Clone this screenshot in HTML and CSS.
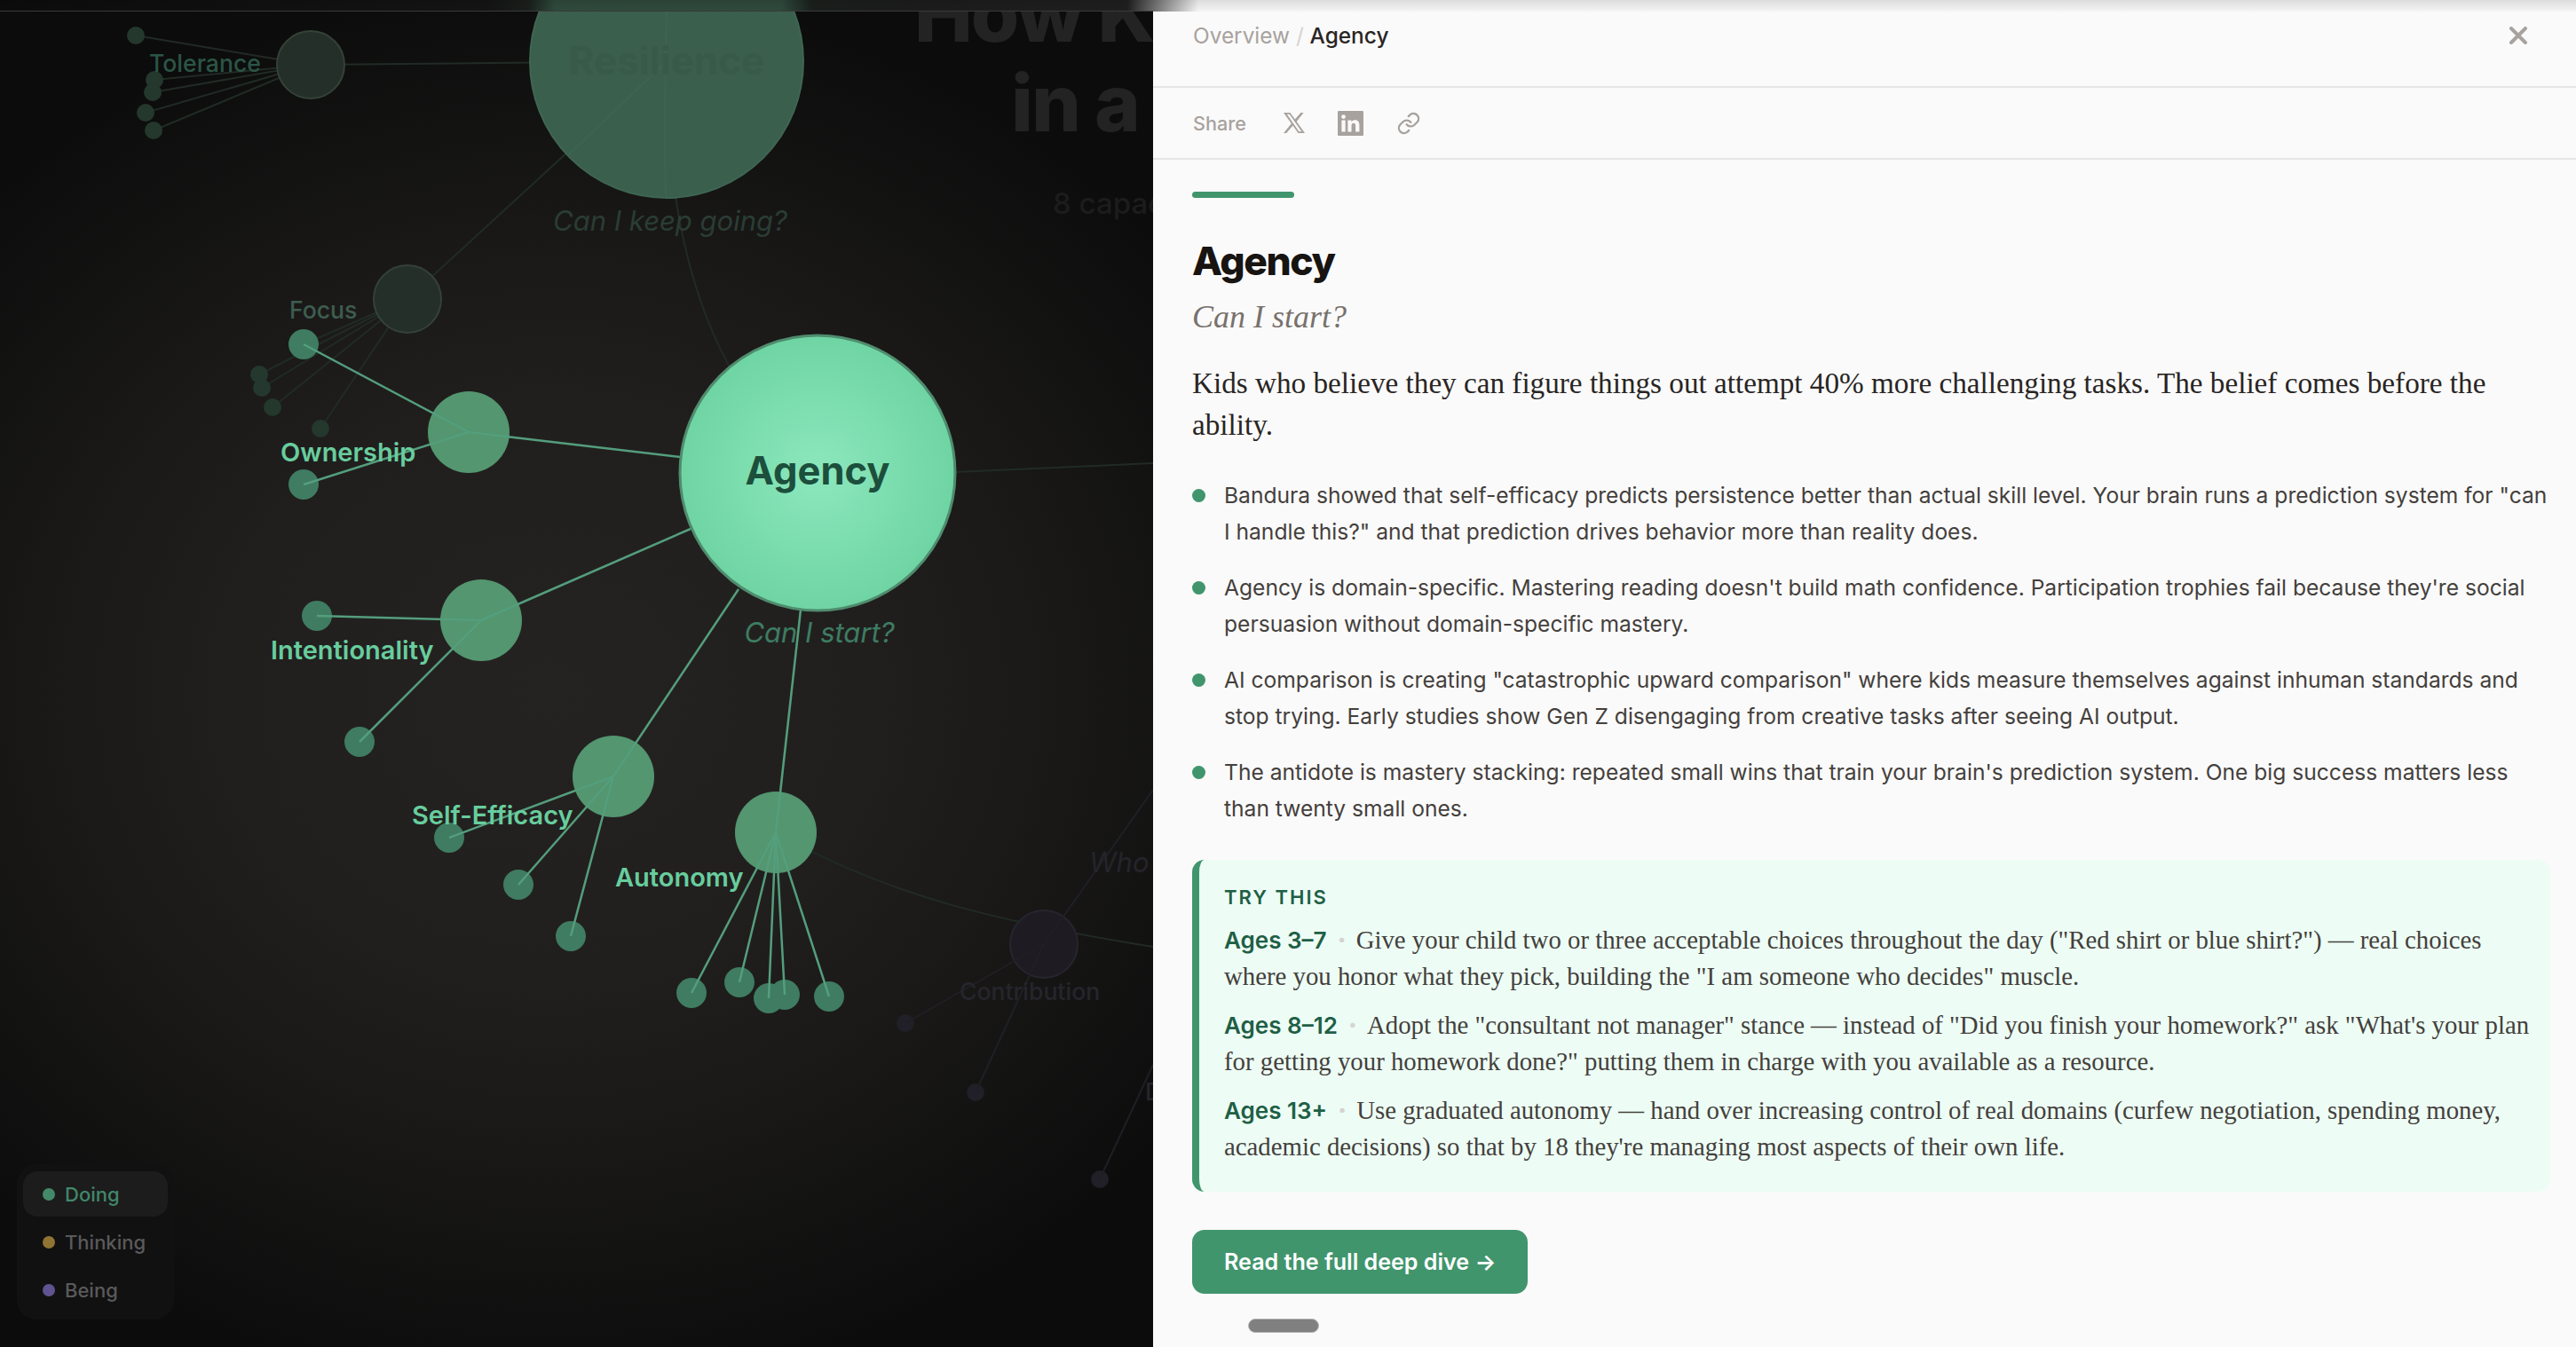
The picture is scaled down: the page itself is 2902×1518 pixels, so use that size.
FILE: index.html
```html
<!DOCTYPE html>
<html lang="en">
<head>
    <meta charset="UTF-8">
    <title>Agency</title>
    <link rel="stylesheet" href="styles.css">
</head>
<body>
    <div class="page">
        <div class="graph">
            <svg class="graph-svg" width="1299" height="1518" viewBox="0 0 1299 1518">
                <defs>
                    <radialGradient id="agency-fill">
                        <stop offset="0" stop-color="#8ce8bd"/>
                        <stop offset="1" stop-color="#6fd4a3"/>
                    </radialGradient>
                </defs>

                <text class="hero hero-top" x="1030" y="47">How Kids Build</text>
                <text class="hero" x="1139" y="148">in a World</text>
                <text class="hero-sub" x="1186" y="241">8 capacities</text>

                <!-- dim links -->
                <g class="link link-dim">
                    <path d="M751 0 C748 120 750 280 821 412"/>
                    <path d="M751 69 L350 73"/>
                    <path d="M751 69 L459 337"/>
                    <path d="M350 73 L153 40 M350 73 L174 90 M350 73 L172 104 M350 73 L164 127 M350 73 L173 147"/>
                    <path d="M459 337 L342 388 M459 337 L292 422 M459 337 L295 437 M459 337 L307 459 M459 337 L361 483"/>
                    <path d="M1076 532 L1299 522"/>
                    <path d="M874 938 C1000 1010 1130 1040 1299 1067"/>
                </g>

                <!-- far nodes -->
                <circle class="hub-large" cx="751" cy="69" r="154"/>
                <circle class="hub-dim" cx="350" cy="73" r="38"/>
                <circle class="hub-dim" cx="459" cy="337" r="38"/>
                <circle class="leaf-dim" cx="153" cy="40" r="10"/>
                <circle class="leaf-dim" cx="174" cy="90" r="10"/>
                <circle class="leaf-dim" cx="172" cy="104" r="10"/>
                <circle class="leaf-dim" cx="164" cy="127" r="10"/>
                <circle class="leaf-dim" cx="173" cy="147" r="10"/>
                <circle class="leaf-dim" cx="292" cy="422" r="10"/>
                <circle class="leaf-dim" cx="295" cy="437" r="10"/>
                <circle class="leaf-dim" cx="307" cy="459" r="10"/>
                <circle class="leaf-dim" cx="361" cy="483" r="10"/>
                <circle class="hub-purple" cx="1176" cy="1064" r="38"/>
                <circle class="leaf-purple" cx="1020" cy="1153" r="10"/>
                <circle class="leaf-purple" cx="1099" cy="1231" r="10"/>
                <circle class="leaf-purple" cx="1239" cy="1329" r="10"/>

                <path class="link link-inside" d="M751 13 C749 90 748 160 750 223"/>
                <path class="link link-inside" d="M751 69 L640 175"/>
                <g class="link link-purple">
                    <path d="M1176 1064 L1020 1153 M1176 1064 L1099 1231"/>
                    <path d="M1176 1064 L1299 890"/>
                    <path d="M1239 1329 L1299 1200"/>
                </g>

                <!-- agency group -->
                <circle class="leaf" cx="342" cy="388" r="17"/>
                <circle class="leaf" cx="342" cy="546" r="17"/>
                <circle class="leaf" cx="357" cy="694" r="17"/>
                <circle class="leaf" cx="405" cy="836" r="17"/>
                <circle class="leaf" cx="506" cy="944" r="17"/>
                <circle class="leaf" cx="584" cy="997" r="17"/>
                <circle class="leaf" cx="643" cy="1055" r="17"/>
                <circle class="leaf" cx="779" cy="1119" r="17"/>
                <circle class="leaf" cx="833" cy="1107" r="17"/>
                <circle class="leaf" cx="884" cy="1121" r="17"/>
                <circle class="leaf" cx="866" cy="1125" r="17"/>
                <circle class="leaf" cx="934" cy="1123" r="17"/>
                <circle class="hub" cx="528" cy="487" r="46"/>
                <circle class="hub" cx="542" cy="699" r="46"/>
                <circle class="hub" cx="691" cy="875" r="46"/>
                <circle class="hub" cx="874" cy="938" r="46"/>

                <g class="link link-bright">
                    <path d="M528 487 L766 515"/>
                    <path d="M542 699 L778 596"/>
                    <path d="M691 875 L832 664"/>
                    <path d="M874 938 L902 687"/>
                    <path d="M528 487 L342 388 M528 487 L342 546"/>
                    <path d="M542 699 L357 694 M542 699 L405 836"/>
                    <path d="M691 875 L506 944 M691 875 L584 997 M691 875 L643 1055"/>
                    <path d="M874 938 L779 1119 M874 938 L833 1107 M874 938 L866 1125 M874 938 L884 1121 M874 938 L934 1123"/>
                </g>

                <circle class="agency-node" cx="921" cy="533" r="155"/>
                <text class="agency-label" x="921" y="546" text-anchor="middle">Agency</text>
                <text class="question" x="923" y="724" text-anchor="middle">Can I start?</text>

                <text class="label label-far" x="168" y="81">Tolerance</text>
                <text class="label label-mid" x="326" y="359">Focus</text>
                <text class="label" x="316" y="520">Ownership</text>
                <text class="label" x="305" y="743">Intentionality</text>
                <text class="label" x="464" y="929">Self-Efficacy</text>
                <text class="label" x="693" y="999">Autonomy</text>
                <text class="label label-purple" x="1081" y="1127">Contribution</text>
                <text class="label label-inside" x="751" y="84" text-anchor="middle">Resilience</text>
                <text class="question question-far" x="755" y="260" text-anchor="middle">Can I keep going?</text>
                <text class="question question-purple" x="1227" y="983">Who am I?</text>
                <text class="label label-purple" x="1290" y="1240">Drive</text>
            </svg>

            <div class="legend">
                <div class="legend-item active"><span class="dot dot-doing"></span>Doing</div>
                <div class="legend-item"><span class="dot dot-thinking"></span>Thinking</div>
                <div class="legend-item"><span class="dot dot-being"></span>Being</div>
            </div>
        </div>

        <div class="panel">
            <div class="panel-head">
                <div class="crumbs"><span class="crumb-link">Overview</span> <span class="crumb-sep">/</span> <span class="crumb-now">Agency</span></div>
                <svg class="close-icon" width="20" height="20" viewBox="0 0 20 20">
                    <path d="M2 2 L18 18 M18 2 L2 18"/>
                </svg>
            </div>

            <div class="share-row">
                <span class="share-label">Share</span>
                <svg class="icon-x" width="26" height="25" viewBox="0 0 26 25">
                    <path d="M1 1 H8.5 L25 24 H17.5 Z M4.8 2.8 L18.4 22.2 H21.3 L7.7 2.8 Z" fill-rule="evenodd"/>
                    <path d="M23.6 1 H20.4 L12.8 9.7 L14.8 12 Z M1 24 H4.2 L12 15 L10.2 12.8 Z"/>
                </svg>
                <svg class="icon-in" width="29" height="28" viewBox="0 0 29 28">
                    <path fill-rule="evenodd" d="M1 0 H28 A1 1 0 0 1 29 1 V27 A1 1 0 0 1 28 28 H1 A1 1 0 0 1 0 27 V1 A1 1 0 0 1 1 0 Z M4.4 10.6 V23.6 H8.6 V10.6 Z M6.5 4.2 A2.4 2.4 0 1 0 6.5 9 A2.4 2.4 0 1 0 6.5 4.2 Z M11.4 10.6 V23.6 H15.5 V16.8 C15.5 15 16.2 13.8 17.9 13.8 C19.5 13.8 20.1 15 20.1 16.9 V23.6 H24.4 V16.1 C24.4 12.2 22.4 10.2 19.4 10.2 C17.4 10.2 16.1 11.2 15.4 12.4 V10.6 Z"/>
                </svg>
                <svg class="icon-link" width="28" height="28" viewBox="0 0 24 24">
                    <path d="M10 13a5 5 0 0 0 7.5.5l3-3a5 5 0 0 0-7-7l-1.7 1.7"/>
                    <path d="M14 11a5 5 0 0 0-7.5-.5l-3 3a5 5 0 0 0 7 7l1.7-1.7"/>
                </svg>
            </div>

            <div class="detail">
                <div class="accent-bar"></div>
                <h1>Agency</h1>
                <p class="tagline">Can I start?</p>
                <p class="lead">Kids who believe they can figure things out attempt 40% more challenging tasks. The belief comes before the ability.</p>

                <ul class="points">
                    <li>Bandura showed that self-efficacy predicts persistence better than actual skill level. Your brain runs a prediction system for "can I handle this?" and that prediction drives behavior more than reality does.</li>
                    <li>Agency is domain-specific. Mastering reading doesn't build math confidence. Participation trophies fail because they're social persuasion without domain-specific mastery.</li>
                    <li>AI comparison is creating "catastrophic upward comparison" where kids measure themselves against inhuman standards and stop trying. Early studies show Gen Z disengaging from creative tasks after seeing AI output.</li>
                    <li>The antidote is mastery stacking: repeated small wins that train your brain's prediction system. One big success matters less than twenty small ones.</li>
                </ul>

                <div class="try-box">
                    <div class="try-title">TRY THIS</div>
                    <p class="try-line"><span class="age">Ages 3–7</span><span class="age-dot">·</span>Give your child two or three acceptable choices throughout the day ("Red shirt or blue shirt?") — real choices where you honor what they pick, building the "I am someone who decides" muscle.</p>
                    <p class="try-line"><span class="age">Ages 8–12</span><span class="age-dot">·</span>Adopt the "consultant not manager" stance — instead of "Did you finish your homework?" ask "What's your plan for getting your homework done?" putting them in charge with you available as a resource.</p>
                    <p class="try-line"><span class="age">Ages 13+</span><span class="age-dot">·</span>Use graduated autonomy — hand over increasing control of real domains (curfew negotiation, spending money, academic decisions) so that by 18 they're managing most aspects of their own life.</p>
                </div>

                <a class="cta" href="#">Read the full deep dive →</a>
            </div>

            <div class="scroll-pill"></div>
        </div>

        <div class="top-strip"></div>
    </div>
</body>
</html>
```

FILE: styles.css
```css
* {
    box-sizing: border-box;
}
html, body {
    margin: 0;
    padding: 0;
}
body {
    font-family: Inter, "Liberation Sans", sans-serif;
    background-color: #0a0a0a;
}
.page {
    position: relative;
    display: flex;
    width: 2902px;
    height: 1518px;
    overflow: hidden;
}

/* graph side */
.graph {
    position: relative;
    width: 1299px;
    flex-shrink: 0;
    background: radial-gradient(ellipse 900px 800px at 620px 780px, #252322 0%, #211f1e 40%, #1a1918 62%, #0c0c0c 100%);
}
.graph-svg {
    display: block;
}
.hero {
    font-size: 88px;
    font-weight: 800;
    letter-spacing: -2px;
    fill: #232323;
}
.hero-sub {
    font-size: 33px;
    font-weight: 500;
    fill: #1c1c1c;
}
.link {
    fill: none;
}
.link-dim {
    stroke: #212b25;
    stroke-width: 2;
}
.link-inside {
    stroke: #3f6351;
    stroke-width: 2;
}
.link-purple {
    stroke: #201f25;
    stroke-width: 2;
}
.link-bright {
    stroke: #549e7d;
    stroke-width: 2.5;
}
.agency-node {
    fill: url(#agency-fill);
    stroke: #4f8c6e;
    stroke-width: 3;
}
.agency-label {
    font-size: 43.5px;
    font-weight: 700;
    fill: #1c4f3c;
}
.hub {
    fill: #53966f;
}
.leaf {
    fill: #3f7c61;
}
.hub-large {
    fill: #3b5f4d;
    stroke: #3f6653;
    stroke-width: 2;
}
.hub-dim {
    fill: #252f29;
    stroke: #344238;
    stroke-width: 2;
}
.leaf-dim {
    fill: #24382d;
}
.hub-purple {
    fill: #1e1c22;
    stroke: #27252d;
    stroke-width: 2;
}
.leaf-purple {
    fill: #211f27;
}
.label {
    font-size: 29px;
    font-weight: 600;
    fill: #68cd9e;
}
.label-far {
    font-size: 26.6px;
    font-weight: 500;
    fill: #2b5545;
}
.label-mid {
    font-size: 26.6px;
    font-weight: 500;
    fill: #3e5d4f;
}
.label-purple {
    font-size: 26.6px;
    font-weight: 500;
    fill: #26252c;
}
.label-inside {
    font-size: 44px;
    font-weight: 700;
    fill: #385a49;
}
.question {
    font-size: 31px;
    font-style: italic;
    fill: #3d7d63;
}
.question-far {
    fill: #2a3d34;
}
.question-purple {
    fill: #25242b;
}

/* legend */
.legend {
    position: absolute;
    left: 19px;
    top: 1312px;
    width: 177px;
    padding: 8px 7px;
    background-color: #111112;
    border-radius: 22px;
}
.legend-item {
    display: flex;
    align-items: center;
    height: 51px;
    margin-bottom: 3px;
    padding-left: 22px;
    border-radius: 16px;
    font-size: 22px;
    font-weight: 500;
    color: #5a5a5a;
}
.legend-item:last-child {
    margin-bottom: 0;
}
.legend-item.active {
    background-color: #1c1c1c;
    color: #42876a;
}
.dot {
    width: 14px;
    height: 14px;
    margin-right: 11px;
    border-radius: 50%;
}
.dot-doing {
    background-color: #448a6a;
}
.dot-thinking {
    background-color: #8f7433;
}
.dot-being {
    background-color: #5f5490;
}

/* panel */
.panel {
    position: relative;
    flex: 1;
    padding-top: 13px;
    background-color: #fafafa;
}
.panel-head {
    display: flex;
    align-items: center;
    justify-content: space-between;
    height: 86px;
    padding: 0 55px 30px 45px;
    border-bottom: 2px solid #e7e5e4;
}
.crumbs {
    font-size: 24.4px;
}
.crumb-link {
    color: #a8a29e;
}
.crumb-sep {
    color: #d6d3d1;
}
.crumb-now {
    font-weight: 500;
    color: #292524;
}
.close-icon path {
    fill: none;
    stroke: #a8a29e;
    stroke-width: 4;
    stroke-linecap: round;
}
.share-row {
    display: flex;
    align-items: center;
    height: 81px;
    padding-left: 45px;
    border-bottom: 2px solid #e7e5e4;
}
.share-label {
    width: 101px;
    font-size: 21.6px;
    font-weight: 500;
    color: #a8a29e;
}
.icon-x, .icon-in {
    fill: #a8a29e;
}
.icon-in {
    margin-left: 36px;
}
.icon-link {
    margin-left: 37px;
    fill: none;
    stroke: #a8a29e;
    stroke-width: 2;
    stroke-linecap: round;
    stroke-linejoin: round;
}
.detail {
    padding: 36px 29px 0 44px;
}
.accent-bar {
    width: 115px;
    height: 7px;
    border-radius: 4px;
    background-color: #41956d;
}
h1 {
    margin: 44px 0 0;
    font-size: 44.4px;
    line-height: 54px;
    font-weight: 800;
    letter-spacing: -1.4px;
    color: #171412;
}
.tagline {
    margin: 14px 0 0;
    font-family: "Liberation Serif", serif;
    font-size: 36px;
    line-height: 44px;
    font-style: italic;
    color: #78716c;
}
.lead {
    margin: 29px 0 0;
    font-family: "Liberation Serif", serif;
    font-size: 33.2px;
    line-height: 47px;
    color: #292524;
}
.points {
    margin: 36px 0 0;
    padding: 0;
    list-style: none;
}
.points li {
    position: relative;
    margin-bottom: 22px;
    padding-left: 36px;
    font-size: 24.6px;
    line-height: 41px;
    color: #44403c;
}
.points li::before {
    content: "";
    position: absolute;
    left: 0;
    top: 13px;
    width: 15px;
    height: 15px;
    border-radius: 50%;
    background-color: #41956d;
}
.try-box {
    margin-top: 37px;
    padding: 26px 12px 30px 28px;
    border-left: 8px solid #41956d;
    border-radius: 14px;
    background-color: #edfdf5;
}
.try-title {
    font-size: 22px;
    line-height: 32px;
    font-weight: 600;
    letter-spacing: 2px;
    color: #1f5f46;
}
.try-line {
    margin: 14px 0 0;
    font-family: "Liberation Serif", serif;
    font-size: 28.8px;
    line-height: 41px;
    color: #44403c;
}
.try-title + .try-line {
    margin-top: 12px;
}
.age {
    font-family: Inter, "Liberation Sans", sans-serif;
    font-size: 26px;
    line-height: 1;
    font-weight: 600;
    color: #1f5f46;
}
.age-dot {
    margin: 0 11px 0 12px;
    font-family: Inter, "Liberation Sans", sans-serif;
    line-height: 1;
    font-weight: 800;
    color: #d6d3d1;
}
.cta {
    display: inline-block;
    margin-top: 43px;
    padding: 0 36px;
    height: 72px;
    line-height: 72px;
    border-radius: 14px;
    background-color: #41956d;
    color: #ffffff;
    font-size: 25.1px;
    font-weight: 600;
    text-decoration: none;
}
.scroll-pill {
    position: absolute;
    left: 107px;
    top: 1486px;
    width: 80px;
    height: 16px;
    border-radius: 8px;
    background-color: #808080;
    border: 1px solid #b5b5b5;
}

/* blurred strip across the top */
.top-strip {
    position: absolute;
    left: 0;
    top: 0;
    width: 100%;
    height: 13px;
    background:
        linear-gradient(to right, #3a3a3a 1299px, transparent 1299px) left bottom / 100% 1px no-repeat,
        linear-gradient(to bottom, rgba(0, 0, 0, 0.1), rgba(0, 0, 0, 0)),
        linear-gradient(to right, #0c0c0c 0, #141414 550px, #1a1f1c 595px, #2f4a3c 625px, #2f4a3c 880px, #1a1f1c 915px, #1c1c1c 1020px, #1f1f1f 1270px, #f5f5f5 1350px, #f5f5f5 100%);
}
```
